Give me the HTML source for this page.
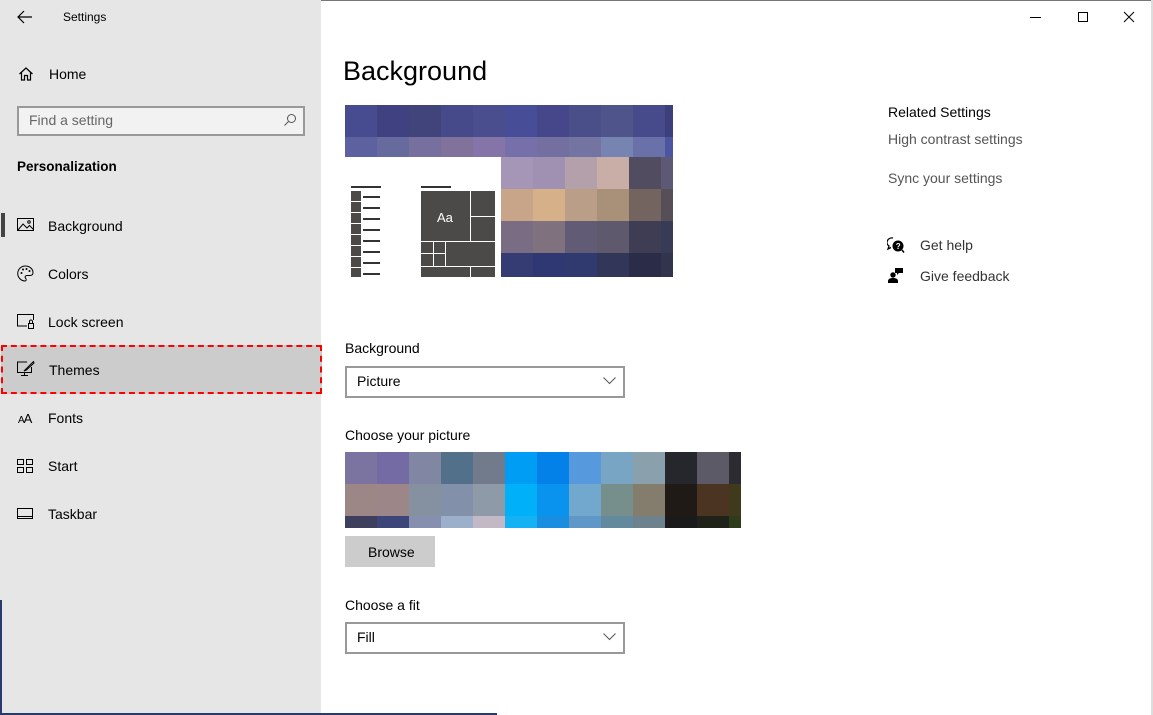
<!DOCTYPE html>
<html><head><meta charset="utf-8"><style>
*{margin:0;padding:0;box-sizing:border-box}
body{width:1153px;height:715px;overflow:hidden;background:#fff;font-family:"Liberation Sans",sans-serif;color:#000;position:relative}
.a{position:absolute}
#side{left:0;top:0;width:321px;height:715px;background:#e6e6e6}
.t{font-size:14px;white-space:nowrap}
.row{display:flex}
.row div{flex:none}
.dd{border:2px solid #999;background:#fff;height:32px}
</style></head><body>
<div class="a" style="left:0;top:0;width:1153px;height:1px;background:#777"></div>
<div class="a" id="side"></div>
<div class="a" style="left:0;top:600px;width:2px;height:115px;background:#2b3a6e"></div>
<div class="a" style="left:0;top:713px;width:497px;height:2px;background:#2b3a6e"></div>
<div class="a" style="left:1151px;top:0;width:2px;height:715px;background:#ddd"></div>

<!-- title -->
<svg class="a" style="left:17px;top:10px" width="16" height="14"><path d="M1 7H15M7 1L1 7L7 13" stroke="#000" stroke-width="1.2" fill="none"/></svg>
<div class="a t" style="left:63px;top:10px;font-size:12px">Settings</div>

<svg class="a" style="left:18px;top:66px" width="16" height="16"><path d="M1.5 8L8 2L14.5 8M3.5 6.5V14H6.5V9.5H9.5V14H12.5V6.5" stroke="#000" stroke-width="1.2" fill="none"/></svg>
<div class="a t" style="left:49px;top:66px;font-size:14px">Home</div>

<div class="a" style="left:17px;top:106px;width:288px;height:30px;border:2px solid #999;background:#f2f2f2"></div>
<div class="a t" style="left:29px;top:112px;color:#666">Find a setting</div>
<svg class="a" style="left:283px;top:113px" width="14" height="14"><circle cx="8.5" cy="5.5" r="4" stroke="#555" fill="none"/><path d="M5.5 8.5L1.5 12.5" stroke="#555"/></svg>

<div class="a t" style="left:17px;top:159px;font-weight:bold;font-size:13.5px">Personalization</div>

<div class="a" style="left:1px;top:213px;width:4px;height:24px;background:#444"></div>
<svg class="a" style="left:17px;top:218px" width="18" height="14"><rect x="0.5" y="0.5" width="16" height="12" stroke="#000" fill="none"/><path d="M1 12L6 6L10 10L12.5 7.5L16.5 11.5" stroke="#000" fill="none"/><circle cx="12" cy="4" r="1.3" stroke="#000" fill="none"/></svg>
<div class="a t" style="left:48px;top:218px">Background</div>

<svg class="a" style="left:17px;top:265px" width="17" height="17"><path d="M8.5 1A7.5 7.5 0 1 0 8 16C9.5 16 9.5 14 8.5 13C7.5 12 8.5 10.5 10 10.5H13C15 10.5 16 9.5 16 7.5C16 4 12.5 1 8.5 1Z" stroke="#000" fill="none"/><circle cx="4.5" cy="8" r="1" fill="#000"/><circle cx="6" cy="4.5" r="1" fill="#000"/><circle cx="9.5" cy="4" r="1" fill="#000"/><circle cx="12.5" cy="6" r="1" fill="#000"/></svg>
<div class="a t" style="left:48px;top:266px">Colors</div>

<svg class="a" style="left:17px;top:314px" width="18" height="16"><path d="M10 12H0.5V0.5H16.5V6" stroke="#000" fill="none"/><rect x="11.5" y="9.5" width="5" height="5" stroke="#000" fill="none"/><path d="M12.5 9.5V7.5A1.5 1.5 0 0 1 15.5 7.5V9.5" stroke="#000" fill="none"/></svg>
<div class="a t" style="left:48px;top:314px">Lock screen</div>

<div class="a" style="left:1px;top:345px;width:321px;height:49px;background:#cccccc;border:2.5px dashed #f00"></div>
<svg class="a" style="left:17px;top:361px" width="18" height="16"><path d="M10 1H0.5V11.5H14.5V6" stroke="#000" fill="none"/><path d="M7.5 11.5V14M4 14.5H11" stroke="#000"/><path d="M16.5 0.5L9 8L7 10L9.5 9L17 2Z" stroke="#000" fill="none"/></svg>
<div class="a t" style="left:49px;top:362px">Themes</div>

<div class="a" style="left:18px;top:411px;font-size:10px;letter-spacing:-1px">A<span style="font-size:13px">A</span></div>
<div class="a t" style="left:48px;top:410px">Fonts</div>

<svg class="a" style="left:17px;top:459px" width="17" height="14"><rect x="0.5" y="0.5" width="6" height="5" stroke="#000" fill="none"/><rect x="9.5" y="0.5" width="6" height="5" stroke="#000" fill="none"/><rect x="0.5" y="8.5" width="6" height="5" stroke="#000" fill="none"/><rect x="9.5" y="8.5" width="6" height="5" stroke="#000" fill="none"/></svg>
<div class="a t" style="left:48px;top:458px">Start</div>

<svg class="a" style="left:17px;top:508px" width="17" height="12"><rect x="0.5" y="0.5" width="15" height="10" stroke="#000" fill="none"/><path d="M1 8.5H15" stroke="#000"/></svg>
<div class="a t" style="left:48px;top:506px">Taskbar</div>

<!-- window controls -->
<div class="a" style="left:1030px;top:17px;width:11px;height:1px;background:#000"></div>
<div class="a" style="left:1078px;top:12px;width:10px;height:10px;border:1px solid #000"></div>
<svg class="a" style="left:1123px;top:11px" width="12" height="12"><path d="M1 1L11 11M11 1L1 11" stroke="#000"/></svg>

<div class="a" style="left:343px;top:56px;font-size:27px">Background</div>

<!-- preview -->
<div class="a" style="left:345px;top:105px;width:328px;height:172px;overflow:hidden;background:#fff">
 <div class="row" style="height:32px">
  <div style="width:32px;background:#474b8f"></div><div style="width:32px;background:#3f4180"></div><div style="width:32px;background:#40447a"></div><div style="width:32px;background:#464a8a"></div><div style="width:32px;background:#4a4d8e"></div><div style="width:32px;background:#474d96"></div><div style="width:32px;background:#45478a"></div><div style="width:32px;background:#4a4f89"></div><div style="width:32px;background:#4f558a"></div><div style="width:32px;background:#474b8c"></div><div style="width:32px;background:#3c3f7c"></div>
 </div>
 <div class="row" style="height:20px">
  <div style="width:32px;background:#5d61a0"></div><div style="width:32px;background:#676a9c"></div><div style="width:32px;background:#77709f"></div><div style="width:32px;background:#80729a"></div><div style="width:32px;background:#8574a8"></div><div style="width:32px;background:#7570aa"></div><div style="width:32px;background:#736fa0"></div><div style="width:32px;background:#7374a2"></div><div style="width:32px;background:#7783b0"></div><div style="width:32px;background:#6a70a8"></div><div style="width:32px;background:#4b55a0"></div>
 </div>
 <div class="a" style="left:156px;top:52px;width:172px">
  <div class="row" style="height:32px"><div style="width:32px;background:#a595b7"></div><div style="width:32px;background:#a090b1"></div><div style="width:32px;background:#b3a0aa"></div><div style="width:32px;background:#c8aea6"></div><div style="width:32px;background:#514c60"></div><div style="width:12px;background:#5d5873"></div></div>
  <div class="row" style="height:32px"><div style="width:32px;background:#c8a589"></div><div style="width:32px;background:#d5b088"></div><div style="width:32px;background:#bb9e88"></div><div style="width:32px;background:#a99079"></div><div style="width:32px;background:#73645f"></div><div style="width:12px;background:#574f57"></div></div>
  <div class="row" style="height:32px"><div style="width:32px;background:#7a6c82"></div><div style="width:32px;background:#80717f"></div><div style="width:32px;background:#625b75"></div><div style="width:32px;background:#5e596d"></div><div style="width:32px;background:#3e3d54"></div><div style="width:12px;background:#383b56"></div></div>
  <div class="row" style="height:24px"><div style="width:32px;background:#353c74"></div><div style="width:32px;background:#2f3873"></div><div style="width:32px;background:#313a6f"></div><div style="width:32px;background:#323659"></div><div style="width:32px;background:#2b2c48"></div><div style="width:12px;background:#32344e"></div></div>
 </div>
 <!-- start list -->
 <div class="a" style="left:6px;top:81px;width:30px;height:2px;background:#333"></div>
 <div class="a" style="left:6px;top:86px;width:10px;height:86px;background:repeating-linear-gradient(#4b4a48 0 10px,#fff 10px 11px)"></div>
 <div class="a" style="left:18px;top:91px;width:17px;height:80px;background:repeating-linear-gradient(transparent 0 0px,#333 0 2px,transparent 2px 11px)"></div>
 <div class="a" style="left:76px;top:81px;width:30px;height:2px;background:#333"></div>
 <div class="a" style="left:76px;top:86px;width:74px;height:86px;background:#4b4a48"></div>
 <div class="a" style="left:125px;top:86px;width:1px;height:50px;background:#fff"></div>
 <div class="a" style="left:125px;top:111px;width:25px;height:1px;background:#fff"></div>
 <div class="a" style="left:76px;top:136px;width:74px;height:1px;background:#fff"></div>
 <div class="a" style="left:76px;top:161px;width:74px;height:1px;background:#fff"></div>
 <div class="a" style="left:88px;top:136px;width:1px;height:25px;background:#fff"></div>
 <div class="a" style="left:100px;top:136px;width:1px;height:25px;background:#fff"></div>
 <div class="a" style="left:76px;top:148px;width:24px;height:1px;background:#fff"></div>
 <div class="a" style="left:125px;top:161px;width:1px;height:11px;background:#fff"></div>
 <div class="a" style="left:92px;top:105px;color:#fff;font-size:13px">Aa</div>
</div>

<div class="a t" style="left:345px;top:340px">Background</div>
<div class="a dd" style="left:345px;top:366px;width:280px"></div>
<div class="a t" style="left:357px;top:373px">Picture</div>
<svg class="a" style="left:603px;top:377px" width="13" height="8"><path d="M0.5 0.5L6.5 6.5L12.5 0.5" stroke="#555" fill="none"/></svg>

<div class="a t" style="left:345px;top:427px">Choose your picture</div>
<div class="a" style="left:345px;top:452px;width:396px;height:76px;overflow:hidden">
 <div class="row" style="height:32px"><div style="width:32px;background:#7c74a0"></div><div style="width:32px;background:#746aa4"></div><div style="width:32px;background:#8187a2"></div><div style="width:32px;background:#527089"></div><div style="width:32px;background:#717b8c"></div><div style="width:32px;background:#009df4"></div><div style="width:32px;background:#0481e9"></div><div style="width:32px;background:#5699dd"></div><div style="width:32px;background:#79a5c4"></div><div style="width:32px;background:#8aa0ad"></div><div style="width:32px;background:#26272d"></div><div style="width:32px;background:#5d5a68"></div><div style="width:12px;background:#2b2b31"></div></div>
 <div class="row" style="height:32px"><div style="width:32px;background:#9c8686"></div><div style="width:32px;background:#9d8687"></div><div style="width:32px;background:#8590a0"></div><div style="width:32px;background:#8390aa"></div><div style="width:32px;background:#8f9aa9"></div><div style="width:32px;background:#00b1fa"></div><div style="width:32px;background:#0993ef"></div><div style="width:32px;background:#73a8ce"></div><div style="width:32px;background:#768f8d"></div><div style="width:32px;background:#847c6c"></div><div style="width:32px;background:#1f1a16"></div><div style="width:32px;background:#4b3522"></div><div style="width:12px;background:#3f3a1c"></div></div>
 <div class="row" style="height:12px"><div style="width:32px;background:#3d3f5d"></div><div style="width:32px;background:#3c4679"></div><div style="width:32px;background:#8690ae"></div><div style="width:32px;background:#9cb0cc"></div><div style="width:32px;background:#c3b9c6"></div><div style="width:32px;background:#14b1f5"></div><div style="width:32px;background:#198ddf"></div><div style="width:32px;background:#5f98c8"></div><div style="width:32px;background:#628a9c"></div><div style="width:32px;background:#6e828d"></div><div style="width:32px;background:#1b1a1a"></div><div style="width:32px;background:#1f2218"></div><div style="width:12px;background:#2f3c1c"></div></div>
</div>
<div class="a" style="left:345px;top:536px;width:90px;height:31px;background:#ccc"></div>
<div class="a t" style="left:368px;top:544px">Browse</div>

<div class="a t" style="left:345px;top:597px">Choose a fit</div>
<div class="a dd" style="left:345px;top:622px;width:280px"></div>
<div class="a t" style="left:357px;top:629px">Fill</div>
<svg class="a" style="left:603px;top:633px" width="13" height="8"><path d="M0.5 0.5L6.5 6.5L12.5 0.5" stroke="#555" fill="none"/></svg>

<!-- related -->
<div class="a t" style="left:888px;top:104px">Related Settings</div>
<div class="a t" style="left:888px;top:131px;color:#555">High contrast settings</div>
<div class="a t" style="left:888px;top:170px;color:#555">Sync your settings</div>
<svg class="a" style="left:887px;top:237px" width="18" height="16"><path d="M6 1A5 4.5 0 0 0 2 9L1 12L4 10.5" stroke="#000" stroke-width="1.3" fill="none"/><circle cx="11" cy="9" r="5.5" fill="#000"/><path d="M15 13L17 15.5" stroke="#000" stroke-width="1.5"/><text x="8.7" y="12" font-size="8" fill="#fff" font-weight="bold" font-family="Liberation Sans">?</text></svg>
<div class="a t" style="left:920px;top:237px;color:#333">Get help</div>
<svg class="a" style="left:888px;top:267px" width="16" height="17"><path d="M7 1H15V6H11L9 8V6H7Z" fill="#000"/><circle cx="5" cy="8" r="2.7" fill="#000"/><path d="M0 16V14C0 12 2 11 5 11C8 11 10 12 10 14V16Z" fill="#000"/></svg>
<div class="a t" style="left:920px;top:268px;color:#333">Give feedback</div>
</body></html>
